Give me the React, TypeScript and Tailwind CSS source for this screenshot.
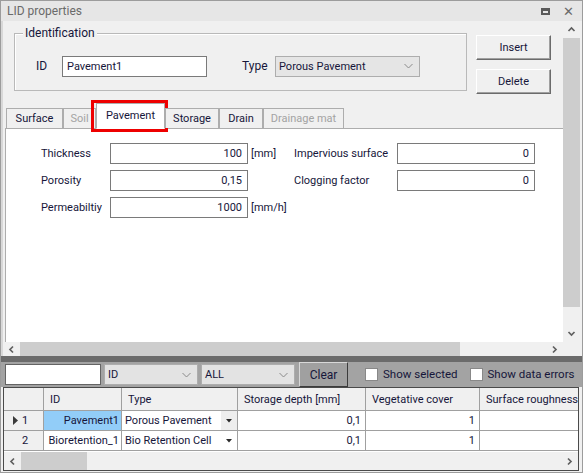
import React from 'react';

type Dir = 'up' | 'down' | 'left' | 'right';

const ink = 'text-[#16163a]';

function Arrow({ dir }: { dir: Dir }) {
  const pts = {
    up: '1.5,6 4.5,3 7.5,6',
    down: '1.5,3 4.5,6 7.5,3',
    left: '6,1.5 3,4.5 6,7.5',
    right: '3,1.5 6,4.5 3,7.5',
  }[dir];
  return (
    <svg width="9" height="9" viewBox="0 0 9 9">
      <polyline points={pts} fill="none" stroke="#606060" strokeWidth="1.7" />
    </svg>
  );
}

function Caret() {
  return (
    <svg width="9" height="6" viewBox="0 0 9 6">
      <polyline points="0.5,1 4.5,5 8.5,1" fill="none" stroke="#8a8a8a" strokeWidth="1" />
    </svg>
  );
}

function Combo({ value, width, bg = 'bg-[#e5e5e5]' }: { value: string; width: string; bg?: string }) {
  return (
    <div className={`${width} h-[21px] ${bg} border border-[#adadad] flex items-center justify-between pl-[3px] pr-[6px] ${ink}`}>
      <span>{value}</span>
      <Caret />
    </div>
  );
}

function Btn({ label }: { label: string }) {
  return (
    <button className={`w-[75px] h-[25px] bg-[#f0f0f0] border border-t-white border-l-white border-r-[#6b6b6b] border-b-[#6b6b6b] shadow-[inset_-1px_-1px_0_#a0a0a0] ${ink}`}>
      {label}
    </button>
  );
}

function NumBox({ value, width = 'w-[138px]' }: { value: string; width?: string }) {
  return (
    <div className={`${width} h-[21px] bg-white border border-[#7a7a7a] flex items-center justify-end pr-[5px] ${ink}`}>
      {value}
    </div>
  );
}

const tabs = [
  { name: 'Surface', w: 'w-[57px]' },
  { name: 'Soil', w: 'w-[33px]', off: true },
  { name: 'Pavement', w: 'w-[69px]', active: true },
  { name: 'Storage', w: 'w-[54px]' },
  { name: 'Drain', w: 'w-[44px]' },
  { name: 'Drainage mat', w: 'w-[81px]', off: true },
];

const cols = [
  { title: '', w: 'w-[40px]' },
  { title: 'ID', w: 'w-[78px]' },
  { title: 'Type', w: 'w-[116px]' },
  { title: 'Storage depth [mm]', w: 'w-[128px]' },
  { title: 'Vegetative cover', w: 'w-[114px]' },
  { title: 'Surface roughness', w: 'flex-1' },
];

const rows = [
  { n: '1', id: 'Pavement1', type: 'Porous Pavement', depth: '0,1', cover: '1', current: true },
  { n: '2', id: 'Bioretention_1', type: 'Bio Retention Cell', depth: '0,1', cover: '1' },
];

export default function App() {
  return (
    <div
      className="w-[583px] h-[473px] bg-[#f0f0f0] border border-[#9c9c9c] flex flex-col text-[11px] leading-none overflow-hidden"
      style={{ fontFamily: 'Roboto, "Open Sans", sans-serif' }}
    >
      {/* title bar */}
      <div className="h-[20px] shrink-0 bg-[#e6e6e6] flex items-center pl-[6px] pr-[8px] text-[#6a6a6a] text-[12px]">
        <span className="flex-1">LID properties</span>
        <span className="w-[9px] h-[7px] border-[2px] border-t-[3px] border-[#5a5a5a] mr-[13px]" />
        <span className="text-[13px] text-[#6a6a6a]">✕</span>
      </div>

      {/* upper editor area */}
      <div className="h-[335px] shrink-0 flex border-l-[2px] border-[#d8d8d8]">
        <div className="flex-1 flex flex-col">
          <div className="flex-1 flex flex-col">
            <div className="flex mt-[12px] ml-[11px]">
              <div className="relative w-[453px] h-[58px] border border-[#b9b9b9] shadow-[inset_1px_1px_0_#ffffff] flex items-center pt-[8px]">
                <span className={`absolute -top-[7px] left-[8px] px-[2px] bg-[#f0f0f0] text-[12px] ${ink}`}>Identification</span>
                <span className={`ml-[21px] w-[26px] ${ink} text-[12px]`}>ID</span>
                <div className={`w-[145px] h-[21px] bg-white border border-[#7a7a7a] flex items-center pl-[4px] ${ink}`}>Pavement1</div>
                <span className={`ml-[35px] w-[33px] text-[12px] ${ink}`}>Type</span>
                <Combo value="Porous Pavement" width="w-[145px]" />
              </div>
              <div className="flex flex-col gap-[9px] ml-[9px] mt-[2px]">
                <Btn label="Insert" />
                <Btn label="Delete" />
              </div>
            </div>

            {/* tab strip */}
            <div className="flex items-end h-[25px] mt-[9px] ml-[3px] relative z-10">
              {tabs.map((t) => (
                <div
                  key={t.name}
                  className={`${t.w} relative flex items-center justify-center border border-[#adadad] ${
                    t.active ? 'h-[26px] bg-white border-b-white -mb-[1px] pb-[2px]' : 'h-[20px] bg-[#f0f0f0] border-b-0'
                  } ${t.off ? 'text-[#a3a3a3]' : ink}`}
                >
                  {t.name}
                  {t.active && (
                    <span className="absolute -left-[6px] -top-[4px] -right-[4px] -bottom-[4px] border-[3px] border-[#ee0000]" />
                  )}
                </div>
              ))}
            </div>

            {/* Pavement page */}
            <div className="flex-1 ml-[2px] bg-white border-l border-t border-[#adadad] flex pt-[14px] pl-[35px]">
              <div className="w-[253px] grid grid-cols-[69px_138px_auto] gap-y-[6px] items-center auto-rows-[21px] content-start">
                <span className={ink}>Thickness</span>
                <NumBox value="100" />
                <span className={`pl-[3px] ${ink}`}>[mm]</span>
                <span className={ink}>Porosity</span>
                <NumBox value="0,15" />
                <span />
                <span className={ink}>Permeabiltiy</span>
                <NumBox value="1000" />
                <span className={`pl-[3px] ${ink}`}>[mm/h]</span>
              </div>
              <div className="grid grid-cols-[103px_138px] gap-y-[6px] items-center auto-rows-[21px] content-start">
                <span className={ink}>Impervious surface</span>
                <NumBox value="0" />
                <span className={ink}>Clogging factor</span>
                <NumBox value="0" />
              </div>
            </div>
          </div>

          {/* horizontal scrollbar */}
          <div className="h-[14px] shrink-0 flex items-center bg-[#f0f0f0]">
            <div className="w-[17px] flex justify-center"><Arrow dir="left" /></div>
            <div className="flex-1 h-full flex items-center">
              <div className="w-[440px] h-full bg-[#cdcdcd]" />
            </div>
            <div className="w-[17px] flex justify-center"><Arrow dir="right" /></div>
          </div>
        </div>

        {/* vertical scrollbar */}
        <div className="w-[17px] mr-[2px] flex flex-col">
          <div className="flex-1 flex flex-col items-center bg-[#f0f0f0]">
            <div className="h-[17px] flex items-center"><Arrow dir="up" /></div>
            <div className="w-full flex-1 bg-[#cdcdcd]" />
            <div className="h-[18px]" />
            <div className="h-[17px] flex items-center"><Arrow dir="down" /></div>
          </div>
          <div className="h-[14px]" />
        </div>
      </div>

      {/* splitter */}
      <div className="h-[6px] shrink-0 bg-[#6b6b6b]" />

      {/* filter bar */}
      <div className="h-[25px] shrink-0 bg-[#a3a3a3] flex items-center pl-[4px]">
        <div className="w-[96px] h-[21px] bg-white border border-[#646464]" />
        <div className="ml-[3px]"><Combo value="ID" width="w-[94px]" bg="bg-[#e3e3e3]" /></div>
        <div className="ml-[3px]"><Combo value="ALL" width="w-[94px]" bg="bg-[#e3e3e3]" /></div>
        <button className={`ml-[4px] w-[49px] h-[25px] bg-[#a0a0a0] border border-t-[#d8d8d8] border-l-[#d8d8d8] border-r-[#3c3c3c] border-b-[#3c3c3c] text-[12px] ${ink}`}>
          Clear
        </button>
        <label className={`flex items-center shrink-0 whitespace-nowrap ml-[17px] text-[11.5px] ${ink}`}>
          <span className="w-[13px] h-[13px] bg-white border border-[#888] mr-[5px]" />
          Show selected
        </label>
        <label className={`flex items-center shrink-0 whitespace-nowrap ml-[12px] text-[11.5px] ${ink}`}>
          <span className="w-[13px] h-[13px] bg-white border border-[#888] mr-[5px]" />
          Show data errors
        </label>
      </div>

      {/* LID grid */}
      <div className="flex-1 ml-[2px] mr-[3px] mb-[1px] border border-[#4a4a4a] bg-white flex flex-col">
        <div className="h-[23px] flex bg-[#f0f0f0] border-b border-[#a0a0a0]">
          {cols.map((c, i) => (
            <div key={i} className={`${c.w} flex items-center pl-[6px] whitespace-nowrap overflow-hidden border-r border-[#a0a0a0] last:border-r-0 ${ink}`}>
              {c.title}
            </div>
          ))}
        </div>
        {rows.map((r) => (
          <div key={r.n} className="h-[20px] flex border-b border-[#a0a0a0]">
            <div className={`w-[40px] bg-[#f0f0f0] border-r border-[#a0a0a0] flex items-center ${ink}`}>
              <span className="w-[14px] flex justify-end">
                {r.current && (
                  <svg width="5" height="9" viewBox="0 0 5 9"><polygon points="0,0 5,4.5 0,9" fill="#3a3a3a" /></svg>
                )}
              </span>
              <span className="ml-[4px]">{r.n}</span>
            </div>
            <div className={`w-[78px] border-r border-[#a0a0a0] flex items-center justify-end pr-[2px] whitespace-nowrap overflow-hidden ${r.current ? 'bg-[#92cdf8]' : ''} ${ink}`}>
              {r.id}
            </div>
            <div className={`w-[116px] border-r border-[#a0a0a0] flex items-center pl-[3px] whitespace-nowrap ${ink}`}>
              <span className="flex-1">{r.type}</span>
              <span className={`w-[16px] h-full flex items-center justify-center ${r.current ? 'bg-[#eeeeee]' : ''}`}>
                <svg width="6" height="4" viewBox="0 0 6 4"><polygon points="0,0 6,0 3,3.5" fill="#2a2a2a" /></svg>
              </span>
            </div>
            <div className={`w-[128px] border-r border-[#a0a0a0] flex items-center justify-end pr-[4px] ${ink}`}>{r.depth}</div>
            <div className={`w-[114px] border-r border-[#a0a0a0] flex items-center justify-end pr-[4px] ${ink}`}>{r.cover}</div>
            <div className="flex-1" />
          </div>
        ))}
        <div className="flex-1" />
        <div className="h-[18px] flex items-center bg-[#f0f0f0]">
          <div className="w-[17px] flex justify-center"><Arrow dir="left" /></div>
          <div className="w-[66px] h-full bg-[#cdcdcd]" />
          <div className="flex-1" />
          <div className="w-[17px] flex justify-center"><Arrow dir="right" /></div>
        </div>
      </div>
    </div>
  );
}
